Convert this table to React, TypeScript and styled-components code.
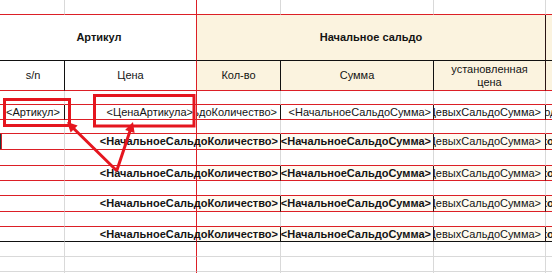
import React from "react";
import styled, { createGlobalStyle } from "styled-components";

const RED = "#dc1f26";
const DARK = "#2a1414";
const BLACK = "#111";
const GREY = "#d9d9d9";
const BEIGE = "#fbf3df";
const CREAM = "#fffaf0";
const MARK = "#e5161f";

const Global = createGlobalStyle`
  html, body { margin: 0; padding: 0; background: #fff; overflow: hidden; }
  body { font-family: "Liberation Sans", Arial, sans-serif; }
`;

const Frame = styled.div`
  position: relative;
  width: 552px;
  height: 273px;
  overflow: hidden;
  background: #fff;
`;

const Sheet = styled.div`
  display: grid;
  grid-template-columns: 2px 63px 132px 84px 153px 112px 89px;
  grid-template-rows: 15px 46px 30px 14px 15px 14px 16px 16px 15px 15px 16px 15px 15px 15px 15px 15px;
  font-size: 11px;
  color: #141414;
`;

type Align = "left" | "center" | "right";

interface CellProps {
  $bg?: string;
  $r?: string;
  $b?: string;
  $align?: Align;
  $bold?: boolean;
  $span?: number;
  $clip?: boolean;
  $padL?: number;
  $padR?: number;
}

const Cell = styled.div<CellProps>`
  box-sizing: border-box;
  min-width: 0;
  grid-column: span ${(p) => p.$span ?? 1};
  background: ${(p) => p.$bg ?? "#fff"};
  border-right: 1px solid ${(p) => p.$r ?? GREY};
  border-bottom: 1px solid ${(p) => p.$b ?? RED};
  display: flex;
  align-items: center;
  justify-content: ${(p) =>
    p.$align === "right" ? "flex-end" : p.$align === "center" ? "center" : "flex-start"};
  padding: 0 ${(p) => p.$padR ?? 2}px 0 ${(p) => p.$padL ?? 2}px;
  font-weight: ${(p) => (p.$bold ? 700 : 400)};
  white-space: nowrap;
  overflow: ${(p) => (p.$clip ? "hidden" : "visible")};
  line-height: 13px;
`;

const HeadText = styled.span`
  text-align: center;
  white-space: pre-line;
  line-height: 13px;
`;

const Cursor = styled.div`
  box-sizing: border-box;
  border-right: 1px solid ${RED};
  border-bottom: 1px solid ${RED};
  background: #35c9c9;
  box-shadow: inset 1px 0 0 #1b3a3a;
`;

const Overlay = styled.svg`
  position: absolute;
  left: 0;
  top: 0;
  pointer-events: none;
`;

const QTY = "<НачальноеСальдоКоличество>";
const SUM = "<НачальноеСальдоСумма>";
const PRICE = "<НачальноеСальдоЦевыхСальдоСумма>";
const NEXT = "<ПриходКоличество>";

const TopRow = () => (
  <>
    <Cell $r={RED} />
    <Cell />
    <Cell $r={RED} />
    <Cell />
    <Cell />
    <Cell />
    <Cell />
  </>
);

const HeaderTop = () => (
  <>
    <Cell $r={RED} $b={BLACK} />
    <Cell $span={2} $r={RED} $b={BLACK} $align="center" $bold>
      Артикул
    </Cell>
    <Cell $span={3} $r={DARK} $b={BLACK} $bg={BEIGE} $align="center" $bold>
      Начальное сальдо
    </Cell>
    <Cell $bg={BEIGE} $b={BLACK} />
  </>
);

const HeaderSub = () => (
  <>
    <Cell $r={RED} />
    <Cell $r={BLACK} $align="center">s/n</Cell>
    <Cell $r={RED} $align="center">Цена</Cell>
    <Cell $r={BLACK} $bg={BEIGE} $align="center">Кол-во</Cell>
    <Cell $r={BLACK} $bg={BEIGE} $align="center">Сумма</Cell>
    <Cell $r={DARK} $bg={BEIGE} $align="center">
      <HeadText>{"установленная\nцена"}</HeadText>
    </Cell>
    <Cell $bg={BEIGE} />
  </>
);

const EmptyRow = ({ line = RED }: { line?: string }) => (
  <>
    <Cell $r={RED} $b={line} />
    <Cell $b={line} />
    <Cell $r={RED} $b={line} />
    <Cell $b={line} />
    <Cell $b={line} />
    <Cell $b={line} />
    <Cell $b={line} />
  </>
);

const DataRow = () => (
  <>
    <Cell $r={RED} />
    <Cell $r={BLACK} $padL={4}>&lt;Артикул&gt;</Cell>
    <Cell $r={RED} $align="right" $padR={3}>&lt;ЦенаАртикула&gt;</Cell>
    <Cell $r={BLACK} $align="right" $clip $padR={3}>{QTY}</Cell>
    <Cell $r={DARK} $align="right" $clip $padR={2}>{SUM}</Cell>
    <Cell $r={DARK} $align="right" $clip $padR={4}>{PRICE}</Cell>
    <Cell $align="right" $clip $padR={12}>{NEXT}</Cell>
  </>
);

const BoldRow = ({ line = RED, cursor = false }: { line?: string; cursor?: boolean }) => (
  <>
    {cursor ? <Cursor /> : <Cell $r={RED} $b={line} />}
    <Cell $b={line} />
    <Cell $r={RED} $b={line} />
    <Cell $r={BLACK} $b={line} $bg={CREAM} $align="right" $bold $padR={2}>
      {QTY}
    </Cell>
    <Cell $r={DARK} $b={line} $bg={CREAM} $align="right" $bold $clip $padR={2}>
      {SUM}
    </Cell>
    <Cell $r={DARK} $b={line} $bg={CREAM} $align="right" $clip $padR={4}>
      {PRICE}
    </Cell>
    <Cell $b={line} $bg={CREAM} $align="right" $bold $clip $padR={3}>
      {NEXT}
    </Cell>
  </>
);

type Pt = [number, number];

const Arrow = ({ from, to }: { from: Pt; to: Pt }) => {
  const dx = to[0] - from[0];
  const dy = to[1] - from[1];
  const len = Math.hypot(dx, dy);
  const ux = dx / len;
  const uy = dy / len;
  const head = 10;
  const half = 5;
  const bx = to[0] - ux * head;
  const by = to[1] - uy * head;
  const nx = -uy;
  const ny = ux;
  const pts = [
    `${to[0]},${to[1]}`,
    `${bx + nx * half},${by + ny * half}`,
    `${bx - nx * half},${by - ny * half}`,
  ].join(" ");
  return (
    <g>
      <line x1={from[0]} y1={from[1]} x2={bx} y2={by} stroke={MARK} strokeWidth={3} strokeLinecap="round" />
      <polygon points={pts} fill={MARK} />
    </g>
  );
};

const Annotations = () => (
  <Overlay width={552} height={273} viewBox="0 0 552 273">
    <rect x={4.5} y={99.5} width={65} height={26} fill="none" stroke={MARK} strokeWidth={3} />
    <rect x={94.5} y={95.5} width={99.5} height={30.5} fill="none" stroke={MARK} strokeWidth={3} />
    <Arrow from={[116, 170]} to={[67, 122]} />
    <Arrow from={[117, 170]} to={[133, 122]} />
  </Overlay>
);

export default function App() {
  return (
    <Frame>
      <Global />
      <Sheet>
        <TopRow />
        <HeaderTop />
        <HeaderSub />
        <EmptyRow />
        <DataRow />
        <EmptyRow />
        <BoldRow cursor />
        <EmptyRow />
        <BoldRow />
        <EmptyRow />
        <BoldRow />
        <EmptyRow />
        <BoldRow line={BLACK} />
        <EmptyRow line={GREY} />
        <EmptyRow line={GREY} />
        <EmptyRow line={GREY} />
      </Sheet>
      <Annotations />
    </Frame>
  );
}
